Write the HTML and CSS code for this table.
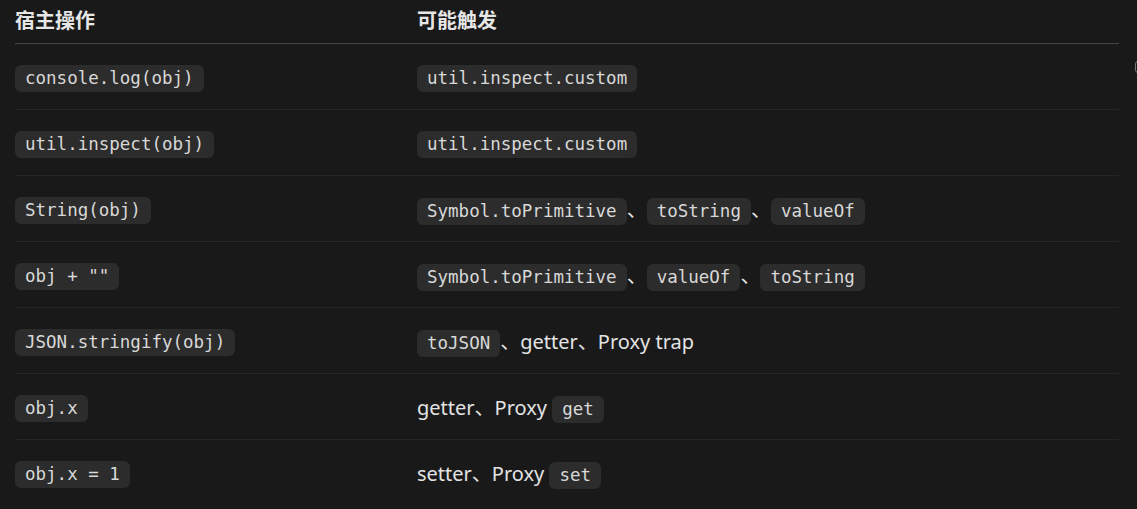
FILE: index.html
```html
<!DOCTYPE html>
<html lang="zh-CN">
<head>
  <meta charset="UTF-8">
  <meta name="viewport" content="width=device-width, initial-scale=1.0">
  <title>宿主操作</title>
  <link rel="stylesheet" href="styles.css">
</head>
<body>
  <table class="ops">
    <thead>
      <tr>
        <th>宿主操作</th>
        <th>可能触发</th>
      </tr>
    </thead>
    <tbody>
      <tr>
        <td><code>console.log(obj)</code></td>
        <td><code>util.inspect.custom</code></td>
      </tr>
      <tr>
        <td><code>util.inspect(obj)</code></td>
        <td><code>util.inspect.custom</code></td>
      </tr>
      <tr>
        <td><code>String(obj)</code></td>
        <td><code>Symbol.toPrimitive</code>、<code>toString</code>、<code>valueOf</code></td>
      </tr>
      <tr>
        <td><code>obj + ""</code></td>
        <td><code>Symbol.toPrimitive</code>、<code>valueOf</code>、<code>toString</code></td>
      </tr>
      <tr>
        <td><code>JSON.stringify(obj)</code></td>
        <td><code>toJSON</code>、getter、Proxy trap</td>
      </tr>
      <tr>
        <td><code>obj.x</code></td>
        <td>getter、Proxy <code>get</code></td>
      </tr>
      <tr>
        <td><code>obj.x = 1</code></td>
        <td>setter、Proxy <code>set</code></td>
      </tr>
    </tbody>
  </table>
  <div class="edge-btn"></div>
</body>
</html>
```

FILE: styles.css
```css
* { box-sizing: border-box; }
body {
  margin: 0;
  padding: 0 18px 0 15px;
  background: #191919;
  color: #e3e3e3;
  font-family: "Noto Sans", "Noto Sans CJK SC", sans-serif;
  font-size: 20px;
  overflow: hidden;
}
.ops {
  width: 1104px;
  border-collapse: collapse;
}
.ops th {
  text-align: left;
  font-weight: 700;
  font-size: 20px;
  height: 43px;
  padding: 0 0 4px;
  color: #e6e6e6;
  border-bottom: 1px solid #444;
}
.ops th:first-child { width: 402px; }
.ops td {
  height: 66px;
  padding: 0;
  border-bottom: 1px solid #262626;
  white-space: nowrap;
}
.ops tbody tr:last-child td { border-bottom: none; }
code {
  font-family: "DejaVu Sans Mono", monospace;
  font-size: 17.5px;
  background: #2c2c2c;
  color: #d8d8d8;
  padding: 3px 10px 4px;
  border-radius: 6px;
}
.edge-btn {
  position: absolute;
  top: 61px;
  left: 1135px;
  width: 12px;
  height: 12px;
  border: 1px solid #777;
  border-radius: 3px;
}
```
